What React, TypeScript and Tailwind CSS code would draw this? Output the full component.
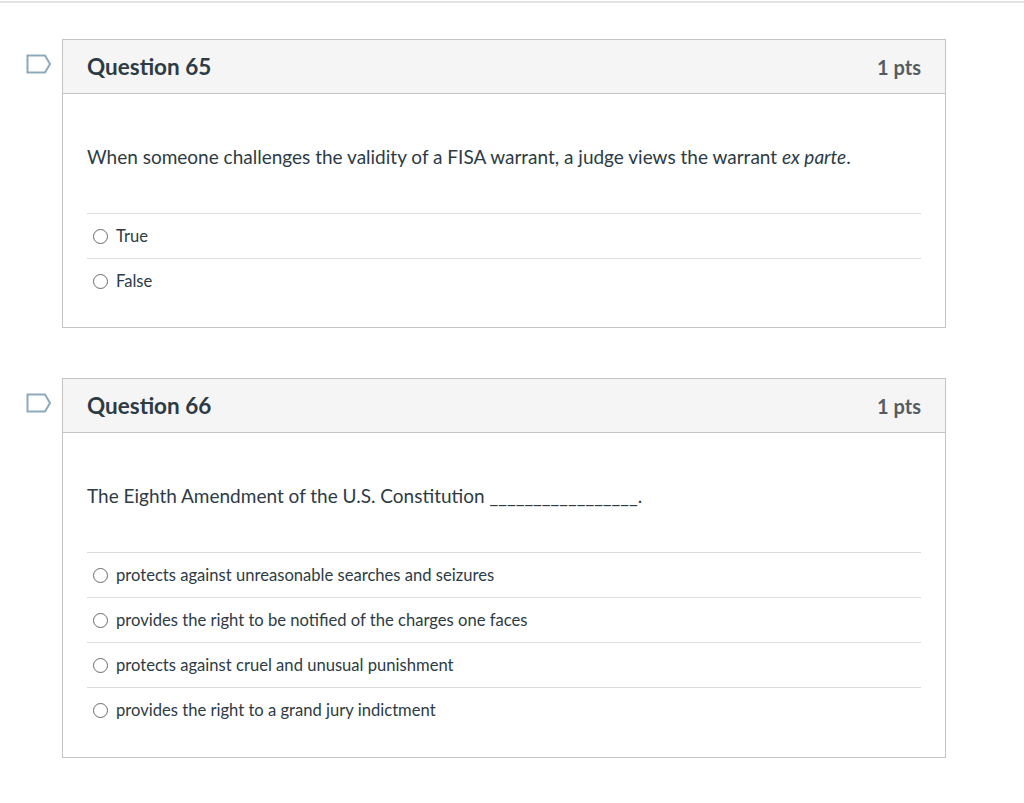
import React from "react";

const Bookmark = () => (
  <svg width="26" height="20" viewBox="0 0 26 20" className="block">
    <path d="M1.5 1.5 H19 L24 10 L19 18.5 H1.5 Z" fill="none" stroke="#8da9be" strokeWidth="2" strokeLinejoin="miter" />
  </svg>
);

const Radio = () => (
  <span className="inline-block w-[15px] h-[15px] rounded-full border border-[#6b6b6b] bg-white shrink-0" />
);

type Q = { num: number; text: React.ReactNode; answers: string[]; last?: boolean };

const Question = ({ q }: { q: Q }) => (
  <div className="relative">
    <div className="absolute left-[26px] top-[15px]">
      <Bookmark />
    </div>
    <div className="ml-[62px] w-[884px] border border-[#c4c4c4] bg-white">
      <div className="h-[54px] bg-[#f5f5f5] border-b border-[#c4c4c4] flex items-center justify-between pl-[24px] pr-[24px]">
        <div className="text-[22.5px] font-bold text-[#2d3b45]">Question {q.num}</div>
        <div className="text-[20px] font-bold text-[#555c61]">1 pts</div>
      </div>
      <div className={q.last ? "px-[24px] pt-[49px] pb-[25px]" : "px-[24px] pt-[49px] pb-[24px]"}>
        <div className="text-[19px] leading-[27px] text-[#2d3b45]">{q.text}</div>
        <div className="mt-[43px]">
          {q.answers.map((a, i) => (
            <div key={i} className="h-[45px] border-t border-[#dcdcdc] flex items-center pl-[6px] gap-[8px]">
              <Radio />
              <span className="text-[16.6px] text-[#2d3b45]">{a}</span>
            </div>
          ))}
        </div>
      </div>
    </div>
  </div>
);

export default function App() {
  const qs: Q[] = [
    {
      num: 65,
      text: (
        <>
          When someone challenges the validity of a FISA warrant, a judge views the warrant <em>ex parte</em>.
        </>
      ),
      answers: ["True", "False"],
    },
    {
      num: 66,
      text: <>The Eighth Amendment of the U.S. Constitution _________________.</>,
      answers: [
        "protects against unreasonable searches and seizures",
        "provides the right to be notified of the charges one faces",
        "protects against cruel and unusual punishment",
        "provides the right to a grand jury indictment",
      ],
      last: true,
    },
  ];
  return (
    <div className="w-[1024px] h-[803px] bg-white font-['Lato',sans-serif] overflow-hidden">
      <div className="mt-px h-[2px] bg-[#e4e4e4]" />
      <div className="pt-[36px] flex flex-col gap-[50px]">
        {qs.map((q) => (
          <Question key={q.num} q={q} />
        ))}
      </div>
    </div>
  );
}
